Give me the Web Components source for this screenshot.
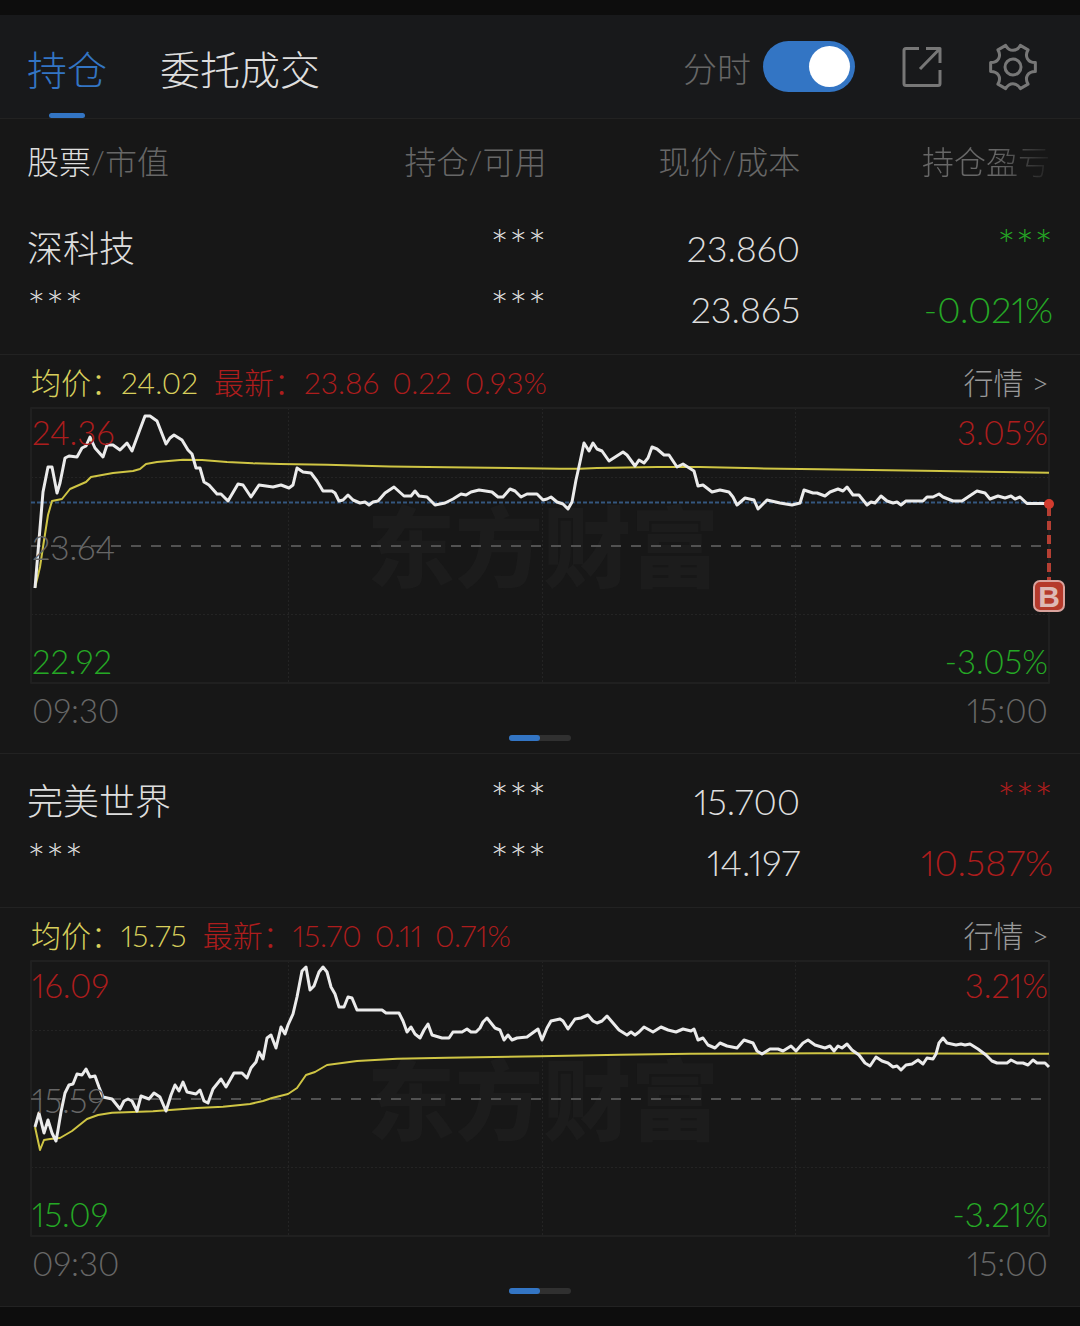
<!DOCTYPE html>
<html lang="zh-CN">
<head>
<meta charset="utf-8">
<meta name="viewport" content="width=device-width, initial-scale=1">
<title>持仓</title>
<style>
:root {
    --bg: #171717;
    --bar: #18191b;
    --line: #222222;
    --blue: #3375c4;
    --text: #dedede;
    --muted: #676767;
    --up: #ad1d1d;
    --down: #25a825;
    --avg: #d8cf5c;
}

body {
    margin: 0;
    padding: 15px 0 20px;
    background: #0d0d0d;
    color: var(--text);
    font-family: Lato, "Noto Sans CJK SC", sans-serif;
    font-weight: 300;
    font-variant-numeric: proportional-nums;
}
</style>
</head>
<body>

<trade-header></trade-header>
<holding-table></holding-table>

<script>
class TradeSwitch extends HTMLElement {
    constructor() {
        super();
        this.attachShadow({ mode: "open" });
    }

    connectedCallback() {
        this.shadowRoot.innerHTML = `
<style>
:host {
    display: flex;
    align-items: center;
    gap: 12px;
}

label {
    padding-top: 4px;
    font-size: 34px;
    line-height: 52px;
    color: var(--muted);
}

input {
    appearance: none;
    display: flex;
    align-items: center;
    box-sizing: border-box;
    width: 92px;
    height: 51px;
    margin: 0;
    padding: 0 5px;
    border-radius: 26px;
    background: #444;
    cursor: pointer;
}

input::before {
    content: "";
    width: 41px;
    height: 41px;
    border-radius: 50%;
    background: #fff;
}

input:checked {
    justify-content: flex-end;
    background: var(--blue);
}
</style>
<label for="sw"><slot></slot></label>
<input id="sw" type="checkbox" role="switch" checked>
`
    }
}

class TradeHeader extends HTMLElement {
    constructor() {
        super();
        this.attachShadow({ mode: "open" });
    }

    connectedCallback() {
        this.render();
        const tabs = this.shadowRoot.querySelectorAll("[role=tab]")
        tabs.forEach(tab => {
            tab.addEventListener("click", function () {
                tabs.forEach(item => item.setAttribute("aria-selected", "false"))
                tab.setAttribute("aria-selected", "true")
            })
        })
    }

    // six notches, one every 60 degrees, joined by the flat tips of the teeth
    gearPath() {
        const notch = [[-7.3, -21.6], [-3.6, -15], [3.6, -15], [7.3, -21.6]]
        let d = ""
        for (let i = 0; i < 6; i++) {
            const a = i * Math.PI / 3
            const p = notch.map(([x, y]) => [
                (x * Math.cos(a) - y * Math.sin(a)).toFixed(2),
                (x * Math.sin(a) + y * Math.cos(a)).toFixed(2)
            ].join(" "))
            d += `${i ? "L" : "M"}${p[0]}C${p[1]} ${p[2]} ${p[3]}`
        }
        return d + "Z"
    }

    render() {
        this.shadowRoot.innerHTML = `
<style>
:host {
    display: flex;
    justify-content: space-between;
    height: 103px;
    padding: 0 43px 0 27px;
    background: var(--bar);
    border-bottom: 1px solid var(--line);
}

button {
    padding: 0;
    border: 0;
    background: none;
    color: inherit;
    font: inherit;
    cursor: pointer;
}

.tabs {
    display: flex;
    gap: 53px;
}

.tabs button {
    position: relative;
    padding-top: 6px;
    font-size: 40px;
    line-height: 60px;
}

.tabs [aria-selected=true] {
    color: var(--blue);
}

.tabs [aria-selected=true]::after {
    content: "";
    position: absolute;
    left: 50%;
    bottom: 0;
    width: 36px;
    height: 5px;
    margin-left: -18px;
    border-radius: 3px;
    background: var(--blue);
}

.tools {
    display: flex;
    align-items: center;
    gap: 43px;
}

.tools button {
    height: 48px;
    color: #777;
}

svg {
    display: block;
    fill: none;
    stroke: currentColor;
    stroke-width: 3;
    stroke-linejoin: round;
}
</style>
<div class="tabs" role="tablist">
    <button role="tab" aria-selected="true">持仓</button>
    <button role="tab" aria-selected="false">委托成交</button>
</div>
<div class="tools">
    <trade-switch>分时</trade-switch>
    <button aria-label="分享">
        <svg width="48" height="48" viewBox="0 0 48 48">
            <path d="M21 5.500H8Q6 5.500 6 7.500V40.500Q6 42.500 8 42.500H40Q42 42.500 42 40.500V27M28 5.500H42V20M42 5.500 22 26"/>
        </svg>
    </button>
    <button aria-label="设置">
        <svg width="48" height="48" viewBox="-24 -24 48 48">
            <path d="${this.gearPath()}"/>
            <circle r="8"/>
        </svg>
    </button>
</div>
`
    }
}

class MinuteChart extends HTMLElement {
    constructor() {
        super();
        this.attachShadow({ mode: "open" });
    }

    set data(stock) {
        this.stock = stock
        this.render()
    }

    render() {
        const s = this.stock
        const cost = s.costY ? `<path class="cost" d="M0 ${s.costY}H1018"/>` : ""
        const trade = s.costY ? `<div class="trade"><b>B</b></div>` : ""

        this.shadowRoot.innerHTML = `
<style>
:host {
    display: block;
    padding: 0 31px 12px;
}

.info {
    display: flex;
    align-items: center;
    height: 53px;
    font-size: 30px;
    line-height: 44px;
    white-space: pre;
}

.avg {
    margin-right: 16px;
    color: var(--avg);
}

.last {
    display: flex;
    gap: 13px;
    color: var(--up);
}

a {
    margin-left: auto;
    color: #999;
    text-decoration: none;
}

.plot {
    position: relative;
    display: grid;
    height: 275px;
}

.plot > svg, .labels, .mark {
    grid-area: 1 / 1;
}

.mark {
    place-self: center;
    padding: 0 0 8px 6px;
    font-family: "Noto Sans CJK SC", sans-serif;
    font-size: 88px;
    line-height: 88px;
    font-weight: 900;
    color: #1c1c1c;
}

svg {
    display: block;
    width: 100%;
    height: 275px;
    overflow: visible;
    fill: none;
}

path, polyline {
    vector-effect: non-scaling-stroke;
    stroke-linejoin: round;
}

.frame { stroke: #202020; stroke-width: 2; }
.grid { stroke: #242424; stroke-dasharray: 2 2; }
.mid { stroke: #525252; stroke-width: 2; stroke-dasharray: 10 10; }
.cost { stroke: #34577f; stroke-width: 2; stroke-dasharray: 4 2; }
.a { stroke: #cfc544; stroke-width: 2; }
.p { stroke: #ebebeb; stroke-width: 3; }

.labels {
    display: flex;
    flex-direction: column;
    justify-content: space-between;
    padding: 2px 0 0;
}

.labels div, .time {
    display: flex;
    justify-content: space-between;
    padding: 0 1px;
    font-size: 33px;
    line-height: 44px;
    color: var(--muted);
}

.labels .up { color: var(--up); }
.labels .down { color: var(--down); }

.time {
    padding: 5px 1px 3px;
}

.trade {
    position: absolute;
    left: 100%;
    top: 95px;
    width: 32px;
    margin-left: -16px;
    padding-top: 77px;
    background: repeating-linear-gradient(#b53f33 0 9px, transparent 9px 14px) center 4px / 4px 73px no-repeat;
}

.trade::before {
    content: "";
    position: absolute;
    left: 11px;
    top: -4px;
    width: 10px;
    height: 10px;
    border-radius: 50%;
    background: #d23b2e;
}

.trade b {
    display: block;
    box-sizing: border-box;
    height: 32px;
    border: 2px solid #d9a39d;
    border-radius: 7px;
    background: #b53a2b;
    color: #ddb9b5;
    font: bold 30px/29px "Liberation Sans", sans-serif;
    text-align: center;
}

.dots {
    display: flex;
    width: 62px;
    height: 6px;
    margin: 0 auto;
    border-radius: 3px;
    background: #303030;
}

.dots i {
    width: 50%;
    border-radius: 3px;
    background: var(--blue);
}
</style>
<div class="info">
    <span class="avg">均价：${s.avg}</span>
    <span class="last"><span>最新：${s.last}</span><span>${s.change}</span><span>${s.percent}</span></span>
    <a href="#${s.name}">行情 &gt;</a>
</div>
<div class="plot">
    <div class="mark">东方财富</div>
    <svg viewBox="0 0 1018 275" preserveAspectRatio="none" aria-hidden="true">
        <path class="grid" d="M257.500 0V275M511.500 0V275M764.500 0V275M0 69.500H1018M0 206.500H1018"/>
        <path class="frame" d="M0 0H1018V275H0Z"/>
        <path class="mid" d="M0 138H1018"/>
        ${cost}
        <polyline class="a" points="${s.avgLine}"/>
        <polyline class="p" points="${s.priceLine}"/>
    </svg>
    <div class="labels">
        <div class="up"><span>${s.high}</span><span>${s.range}</span></div>
        <div><span>${s.mid}</span></div>
        <div class="down"><span>${s.low}</span><span>-${s.range}</span></div>
    </div>
    ${trade}
</div>
<div class="time"><span>09:30</span><span>15:00</span></div>
<div class="dots"><i></i></div>
`
    }
}

const stocks = [
    {
        name: "深科技", price: "23.860", cost: "23.865", profit: "-0.021%", trend: "down",
        avg: "24.02", last: "23.86", change: "0.22", percent: "0.93%",
        high: "24.36", mid: "23.64", low: "22.92", range: "3.05%", costY: 94.5,
        avgLine: `4,180 9,159 12,139 17,107 21,93 31,91 39,81 55,74 60,69 82,65 102,63 109,61 115,56 126,54
            152,51.700 171,52 196,54 222,55.300 249,56 296,56.700 359,58.500 416,59.300 529,60.700 549,60.700 566,60 626,59
            669,59 726,60.300 789,61.300 909,63 1018,64.700`,
        priceLine: `4,180 8,132 12,84 17,59 21,59 26,85 29,75 34,50 38,48 46,49 51,40 55,38 59,29 64,40 72,49
            76,37 82,37 89,42 96,35 101,43 108,24 114,8 119,8 126,13 135,36 139,30 143,27 151,32 157,42 161,46
            165,60 169,60 173,74 178,77 186,86 190,86 197,93 207,76 212,77 220,89 228,77 242,79 250,77 258,80
            262,77 266,60 272,64 280,65 286,73 292,83 301,83 304,85 308,93 312,92 317,87 322,92 329,95 334,94
            338,97 342,94 347,93 354,85 363,79 373,88 380,88 384,83 388,88 396,89 404,97 414,95 422,91 430,86
            435,87 440,84 448,82 461,84 467,89 472,89 479,81 484,83 490,89 496,86 506,86 512,92 516,91 520,89
            526,94 532,96 537,101 541,94 545,72 549,54 553,35 558,43 562,35 566,41 571,43 578,53 592,44 596,47
            604,58 608,52 613,55 617,50 621,39 626,41 633,47 638,47 646,59 652,56 663,63 667,78 672,77 681,84
            689,82 698,84 702,89 706,97 714,90 723,92 727,101 736,92 749,95 761,97 769,95 773,82 782,85 786,85
            794,88 799,84 807,81 812,83 816,79 822,87 828,87 836,97 840,94 844,95 850,88 856,93 862,95 866,94
            870,97 875,93 892,93 896,89 902,89 908,86 912,89 922,93 931,93 946,83 954,85 959,91 967,88 974,90
            980,88 984,91 989,89 996,95.500 1018,95.500`
    },
    {
        name: "完美世界", price: "15.700", cost: "14.197", profit: "10.587%", trend: "up",
        avg: "15.75", last: "15.70", change: "0.11", percent: "0.71%",
        high: "16.09", mid: "15.59", low: "15.09", range: "3.21%",
        avgLine: `4,166 9,189 13,179 19,178 29,177 41,170 56,158 67,154 81,151.700 122,150.300 166,147 192,145.700 219,143
            232,140 241,137 257,133 266,127 275,114 284,111 296,104 326,100 366,97.700 416,96.700 509,95.300 589,93.700
            659,92.700 789,92.300 1018,92.700`,
        priceLine: `4,166 8,152 13,172 17,159 21,172 25,180 27,169 30,151 34,132 38,124 42,123 46,113 51,114
            55,108 59,116 64,115 68,126 72,136 81,138 89,148 93,140 97,138 101,140 106,150 110,135 118,138
            123,132 129,136 135,150 140,134 144,124 148,130 152,121 156,131 165,133 169,129 173,140 177,142
            182,128 190,118 195,126 203,112 211,112 216,117 220,107 225,101 228,91 232,98 236,77 240,74 245,87
            250,66 254,73 257,64 262,53 266,36 271,10 275,6 279,29 283,25 288,11 292,6 296,11 300,26 304,33
            308,46 313,46 317,36 321,37 326,49 351,49 355,52 368,52 372,60 376,71 380,66 384,73 389,77 393,69
            397,63 401,74 411,77 418,77 422,71 431,71 436,68 440,71 445,71 449,67 452,61 456,57 464,67 469,69
            473,79 477,74 481,79 486,77 496,76 507,68 511,79 516,67 520,60 529,58 532,60 537,68 544,58 550,57
            557,54 562,60 566,62 571,60 576,55 582,62 588,69 596,74 600,71 604,74 608,71 613,66 622,71 630,66
            637,69 645,71 652,68 660,70 663,68 667,79 672,77 677,84 684,87 689,82 696,85 706,87 713,79 722,82
            726,90 731,93 739,88 747,88 752,90 760,85 765,90 772,82 777,79 784,84 794,87 799,85 803,90 807,85
            811,87 816,83 821,89 828,94 834,102 839,105 845,96 851,100 857,102 862,106 866,105 870,109 875,104
            881,103 887,99 892,103 896,97 902,98 905,93 908,82 912,77 916,82 925,84 930,83 934,84 939,83
            947,88 955,94 961,100 966,102 976,102 980,99 986,102 992,102 997,104 1002,99 1006,102 1014,102 1018,106`
    }
]

class HoldingTable extends HTMLElement {
    constructor() {
        super();
        this.attachShadow({ mode: "open" });
    }

    connectedCallback() {
        this.render();
        this.shadowRoot.querySelectorAll("minute-chart").forEach((chart, i) => {
            chart.data = stocks[i]
        })
    }

    rows(s) {
        return `
<tbody>
    <tr class="first"><td>${s.name}</td><td><span class="stars">***</span></td><td>${s.price}</td><td class="${s.trend}"><span class="stars">***</span></td></tr>
    <tr class="second"><td><span class="stars">***</span></td><td><span class="stars">***</span></td><td>${s.cost}</td><td class="${s.trend}">${s.profit}</td></tr>
    <tr><td class="chart" colspan="4"><minute-chart></minute-chart></td></tr>
</tbody>`
    }

    render() {
        this.shadowRoot.innerHTML = `
<style>
:host {
    display: block;
    background: var(--bg);
}

table {
    width: 100%;
    table-layout: fixed;
    border-spacing: 0;
    text-align: right;
}

th, td {
    padding: 0;
    white-space: nowrap;
}

th:first-child, td:first-child {
    padding-left: 27px;
    text-align: left;
}

th:last-child, td:last-child {
    padding-right: 27px;
}

th {
    padding: 19px 0 15px;
    font-size: 32px;
    line-height: 48px;
    font-weight: inherit;
    color: var(--muted);
}

th em {
    font-style: normal;
    color: var(--text);
}

th.fade:last-child {
    padding-right: 30px;
    -webkit-mask-image: linear-gradient(90deg, #000 70%, transparent 92%);
    mask-image: linear-gradient(90deg, #000 70%, transparent 92%);
}

td {
    height: 61px;
    font-size: 36px;
    line-height: 61px;
}

.stars {
    font-size: 44px;
    line-height: 0;
}

.first td { padding-top: 17px; }
.second td { padding-bottom: 14px; }
.up { color: var(--up); }
.down { color: var(--down); }

td.chart {
    height: auto;
    padding: 0;
    border: solid var(--line);
    border-width: 1px 0;
    line-height: normal;
}
</style>
<table>
    <colgroup><col style="width:27%"><col style="width:23.6%"><col style="width:23.500%"><col></colgroup>
    <thead>
        <tr><th><em>股票</em>/市值</th><th>持仓/可用</th><th>现价/成本</th><th class="fade">持仓盈亏</th></tr>
    </thead>
    ${stocks.map(this.rows).join("")}
</table>
`
    }
}

customElements.define("trade-switch", TradeSwitch)
customElements.define("trade-header", TradeHeader)
customElements.define("minute-chart", MinuteChart)
customElements.define("holding-table", HoldingTable)
</script>
</body>
</html>
